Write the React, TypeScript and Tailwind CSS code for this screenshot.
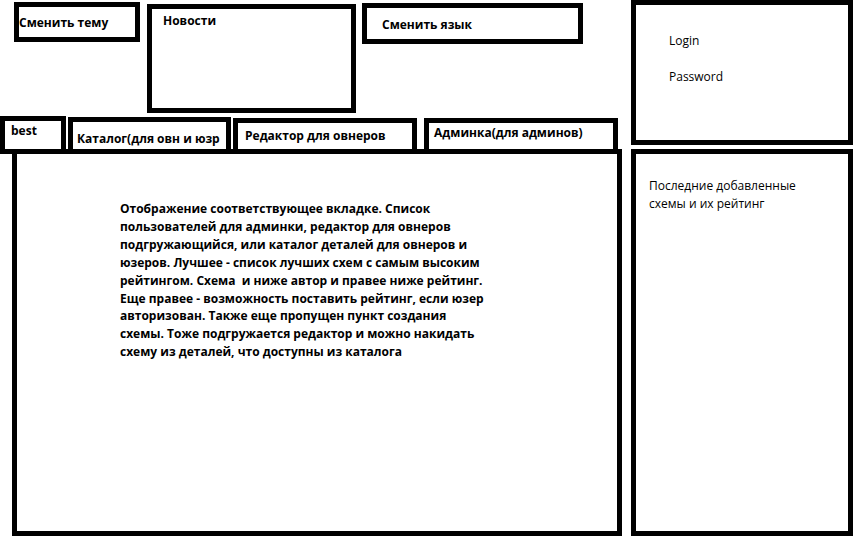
import React from "react";

const font = { fontFamily: '"Open Sans", "Noto Sans", sans-serif' };

const mainLines = [
  "Отображение соответствующее вкладке. Список",
  "пользователей для админки, редактор для овнеров",
  "подгружающийся, или каталог деталей для овнеров и",
  "юзеров. Лучшее - список лучших схем с самым высоким",
  "рейтингом. Схема  и ниже автор и правее ниже рейтинг.",
  "Еще правее - возможность поставить рейтинг, если юзер",
  "авторизован. Также еще пропущен пункт создания",
  "схемы. Тоже подгружается редактор и можно накидать",
  "схему из деталей, что доступны из каталога",
];

export default function App() {
  return (
    <div
      className="flex w-[855px] h-[536px] bg-white text-black overflow-hidden"
      style={font}
    >
      {/* left column */}
      <div className="flex flex-col w-[622px] h-full">
        {/* top boxes */}
        <div className="flex items-start h-[116px] shrink-0">
          <div className="ml-[14px] mt-[2px] w-[126px] h-[40px] border-[5px] border-black pt-[8px] text-[12px] leading-[16px] font-bold whitespace-nowrap">
            Сменить тему
          </div>
          <div className="ml-[7px] mt-[4px] w-[209px] h-[109px] border-[5px] border-black pl-[11px] pt-[4px] text-[12px] leading-[16px] font-bold">
            Новости
          </div>
          <div className="ml-[6px] mt-[3px] w-[221px] h-[41px] border-[5px] border-black pl-[15px] pt-[9px] text-[12px] leading-[16px] font-bold">
            Сменить язык
          </div>
        </div>
        {/* tabs */}
        <div className="flex items-end w-[622px] h-[38px] shrink-0 border-b-[5px] border-black">
          <div className="w-[66px] h-[33px] border-[5px] border-b-0 border-black pl-[6px] pt-[2px] text-[12px] leading-[16px] font-bold">
            best
          </div>
          <div className="ml-[2px] w-[163px] h-[32px] border-[5px] border-b-0 border-black pl-[4px] pt-[9px] text-[12px] leading-[16px] font-bold whitespace-nowrap overflow-hidden">
            Каталог(для овн и юзр
          </div>
          <div className="ml-[2px] w-[184px] h-[31px] border-[5px] border-b-0 border-black pl-[7px] pt-[5px] text-[12px] leading-[16px] font-bold whitespace-nowrap">
            Редактор для овнеров
          </div>
          <div className="ml-[7px] w-[194px] h-[31px] border-[5px] border-b-0 border-black pl-[5px] pt-[2px] text-[12px] leading-[16px] font-bold whitespace-nowrap">
            Админка(для админов)
          </div>
        </div>
        {/* main */}
        <div className="ml-[12px] w-[610px] flex-1 border-[5px] border-t-0 border-black pl-[103px] pt-[46px]">
          <div className="text-[12px] leading-[17.9px] font-bold whitespace-pre">
            {mainLines.map((l, i) => (
              <div key={i}>{l}</div>
            ))}
          </div>
        </div>
      </div>
      {/* right column */}
      <div className="ml-[9px] w-[222px] flex flex-col h-full">
        <div className="h-[145px] shrink-0 border-[5px] border-black pl-[33px] pt-[28px] text-[12px] leading-[16px]">
          <div>Login</div>
          <div className="mt-[20px]">Password</div>
        </div>
        <div className="mt-[4px] flex-1 border-[5px] border-black pl-[13px] pt-[23px] text-[12px] leading-[17.5px]">
          <div>Последние добавленные</div>
          <div>схемы и их рейтинг</div>
        </div>
      </div>
    </div>
  );
}
